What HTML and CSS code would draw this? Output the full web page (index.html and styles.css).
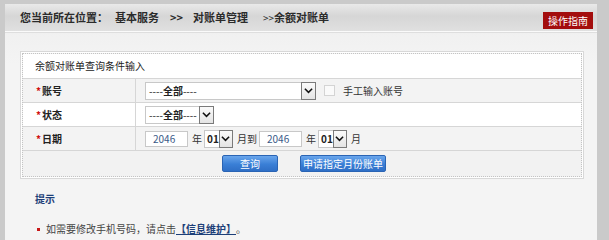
FILE: index.html
```html
<!DOCTYPE html>
<html lang="zh-CN">
<head>
  <meta charset="UTF-8">
  <title>余额对账单</title>
  <link rel="stylesheet" href="styles.css">
</head>
<body>

  <div class="page">
    <div class="header">
      <div class="crumbs">
        <span class="crumb-lead">您当前所在位置：</span>
        <span class="crumb">基本服务</span>
        <span class="crumb sep">&gt;&gt;</span>
        <span class="crumb">对账单管理</span>
        <span class="crumb last"><small>&gt;&gt;</small>余额对账单</span>
      </div>
      <a class="guide-button" href="#">操作指南</a>
    </div>

    <div class="form-box">
      <div class="form-inner">
        <div class="form-title">余额对账单查询条件输入</div>

        <div class="form-row shaded">
          <div class="label"><i>*</i>账号</div>
          <div class="field">
            <span class="select select-wide">
              <span class="select-text">----<b>全部</b>----</span>
              <span class="select-arrow"><svg viewBox="0 0 10 7"><path d="M1 1.5 L5 5.5 L9 1.5" /></svg></span>
            </span>
            <span class="checkbox"></span>
            <span class="check-label">手工输入账号</span>
          </div>
        </div>

        <div class="form-row">
          <div class="label"><i>*</i>状态</div>
          <div class="field">
            <span class="select select-mid">
              <span class="select-text">----<b>全部</b>----</span>
              <span class="select-arrow"><svg viewBox="0 0 10 7"><path d="M1 1.5 L5 5.5 L9 1.5" /></svg></span>
            </span>
          </div>
        </div>

        <div class="form-row shaded">
          <div class="label"><i>*</i>日期</div>
          <div class="field">
            <span class="year-input">2046</span>
            <span class="unit">年</span>
            <span class="select select-month">
              <span class="select-text"><b>01</b></span>
              <span class="select-arrow"><svg viewBox="0 0 10 7"><path d="M1 1.5 L5 5.5 L9 1.5" /></svg></span>
            </span>
            <span class="unit">月到</span>
            <span class="year-input">2046</span>
            <span class="unit">年</span>
            <span class="select select-month">
              <span class="select-text"><b>01</b></span>
              <span class="select-arrow"><svg viewBox="0 0 10 7"><path d="M1 1.5 L5 5.5 L9 1.5" /></svg></span>
            </span>
            <span class="unit">月</span>
          </div>
        </div>

        <div class="form-actions">
          <button class="blue-button btn-query">查询</button>
          <button class="blue-button btn-apply">申请指定月份账单</button>
        </div>
      </div>
    </div>

    <div class="tips">
      <h3>提示</h3>
      <p><i></i>如需要修改手机号码，请点击<a href="#">【信息维护】</a>。</p>
    </div>
  </div>

</body>
</html>
```

FILE: styles.css
```css
body {
  margin: 0;
  padding: 4px 0 0 5px;
  background-color: #cacaca;
  font-family: "Noto Sans CJK SC", "Liberation Sans", sans-serif;
  font-size: 10px;
  color: #333;
  overflow: hidden;
}

.page {
  width: 592px;
  height: 240px;
  background: linear-gradient(#ededed, #f4f4f4 60px);
}

/* header / breadcrumb */
.header {
  height: 27px;
  display: flex;
  justify-content: space-between;
  align-items: flex-end;
  background: linear-gradient(#e9e9e9, #d6d6d6 45%, #e0e0e0);
  border-bottom: 1px solid #fafafa;
  box-shadow: 0 1px 0 #dedede;
}

.crumbs {
  display: flex;
  align-self: center;
  padding-left: 15px;
  font-size: 11px;
  font-weight: bold;
  color: #2b2b2b;
  line-height: 14px;
}

.crumb-lead {
  margin-right: 7px;
}

.crumb {
  margin-right: 11px;
}

.crumb.sep {
  margin-right: 10px;
}

.crumb.last {
  margin-left: 4px;
}

.crumb small {
  font-size: 10px;
  font-weight: normal;
}

.guide-button {
  margin: 0 4px 2px 0;
  width: 50px;
  height: 17px;
  line-height: 17px;
  text-align: center;
  background-color: #a30d0d;
  color: #fff;
  font-size: 10px;
  text-decoration: none;
}

/* query form */
.form-box {
  margin: 19px 0 0 15px;
  width: 560px;
  padding: 1px;
  border: 1px solid #d8d8d8;
  background-color: #fff;
}

.form-inner {
  border: 1px dotted #c4c4c4;
  background-color: #f2f2f2;
}

.form-title {
  height: 24px;
  line-height: 24px;
  padding-left: 12px;
  background-color: #fff;
  border-bottom: 1px solid #d6d6d6;
  color: #222;
}

.form-row {
  display: flex;
  height: 23px;
  border-bottom: 1px solid #d6d6d6;
  background-color: #fff;
}

.form-row.shaded {
  background-color: #f3f3f3;
}

.label {
  width: 99px;
  padding-left: 13px;
  border-right: 1px solid #d6d6d6;
  font-weight: bold;
  line-height: 23px;
  color: #222;
}

.label i {
  font-style: normal;
  color: #d01010;
  margin-right: 1px;
}

.field {
  display: flex;
  align-items: center;
  padding-left: 9px;
}

.select {
  display: flex;
  height: 16px;
  border: 1px solid #c8c8c8;
  background-color: #fff;
  line-height: 16px;
}

.select-text {
  flex: 1;
  padding-left: 3px;
  color: #222;
}

.select-text b {
  font-weight: bold;
}

.select-arrow {
  width: 13px;
  border: 1px solid #7a7a7a;
  margin: -1px -1px -1px 0;
  background: linear-gradient(#fafafa, #e4e4e4);
  display: flex;
  align-items: center;
  justify-content: center;
}

.select-arrow svg {
  width: 9px;
  height: 7px;
}

.select-arrow path {
  fill: none;
  stroke: #111;
  stroke-width: 1.7;
}

.select-wide {
  width: 169px;
}

.select-mid {
  width: 67px;
}

.select-month {
  width: 27px;
}

.select-month .select-text {
  padding-left: 2px;
}

.checkbox {
  width: 9px;
  height: 9px;
  margin-left: 8px;
  border: 1px solid #d4d4d4;
  background-color: #fafafa;
}

.check-label {
  margin-left: 8px;
  color: #333;
}

.year-input {
  width: 34px;
  height: 14px;
  line-height: 14px;
  padding-left: 7px;
  border: 1px solid #c8c8c8;
  background-color: #fff;
  color: #3b5a88;
}

.unit {
  margin: 0 2px 0 4px;
  color: #333;
}

.unit + .year-input {
  margin-left: 0;
}

.form-actions {
  height: 25px;
  display: flex;
  justify-content: center;
  align-items: center;
  gap: 22px;
  padding-left: 4px;
}

.blue-button {
  height: 17px;
  padding: 0;
  border: 1px solid #2a64b4;
  border-radius: 2px;
  background: linear-gradient(#6aa6ec, #3a7fd6 55%, #2f6fc6);
  color: #fff;
  font-family: inherit;
  font-size: 10px;
  line-height: 15px;
}

.btn-query {
  width: 56px;
}

.btn-apply {
  width: 86px;
}

/* tips */
.tips {
  padding-left: 30px;
}

.tips h3 {
  margin: 13px 0 0;
  font-size: 10px;
  line-height: 14px;
  color: #1d3f78;
}

.tips p {
  margin: 16px 0 0;
  line-height: 14px;
  color: #444;
  display: flex;
  align-items: center;
}

.tips p i {
  width: 3px;
  height: 3px;
  margin: 0 6px 0 2px;
  background-color: #c81818;
}

.tips a {
  color: #1d3f78;
  font-weight: bold;
  text-decoration: underline;
}
```
